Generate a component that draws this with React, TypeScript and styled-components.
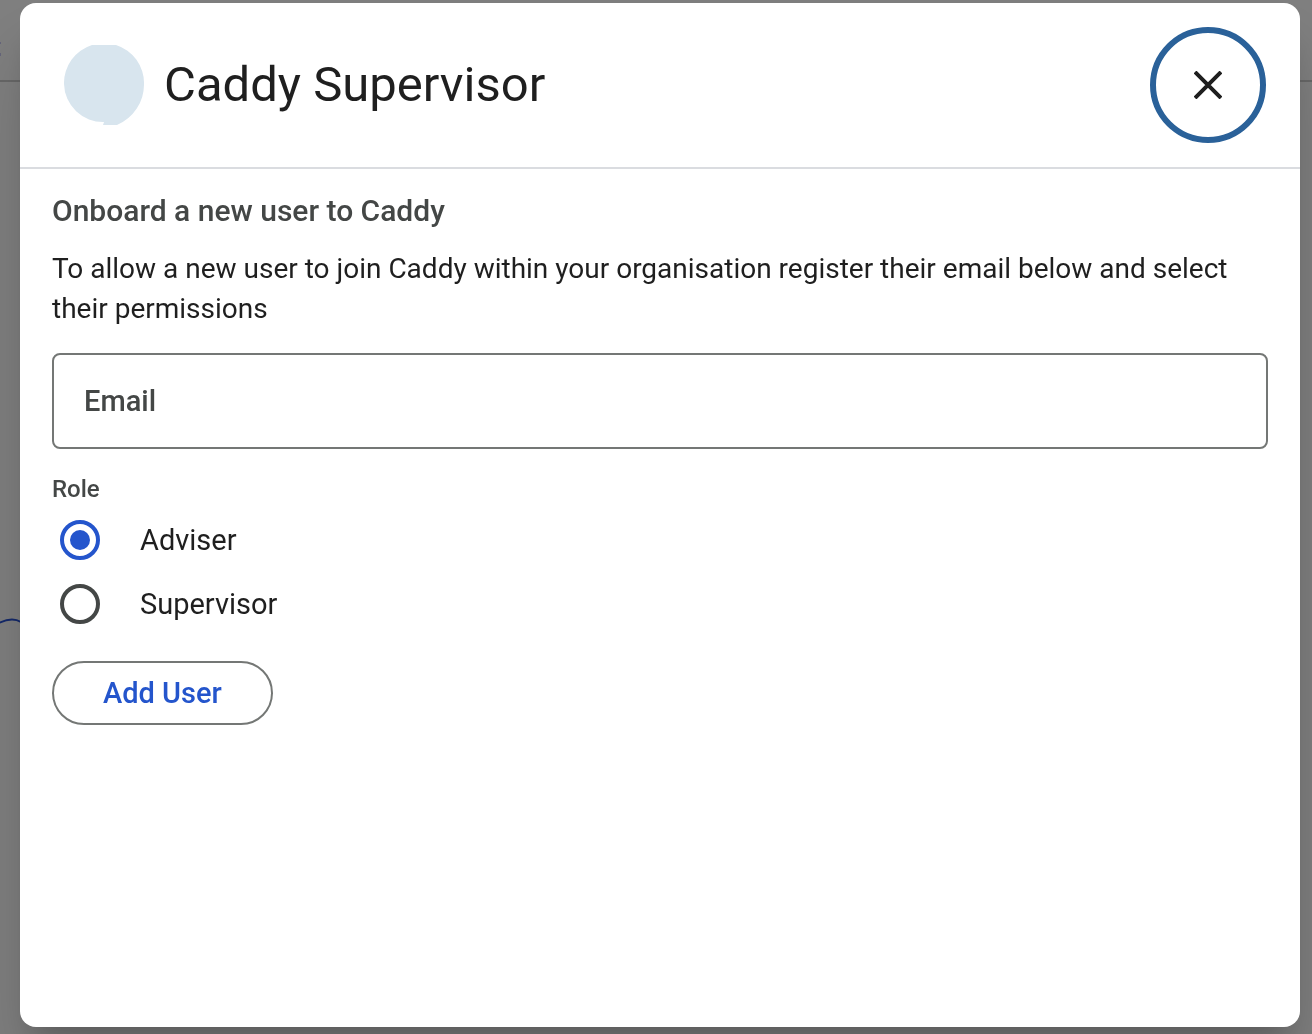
import React, { useState } from "react";
import styled, { createGlobalStyle } from "styled-components";

const GlobalStyle = createGlobalStyle`
  *, *::before, *::after { box-sizing: border-box; }
  body {
    margin: 0;
    background: #808080;
    color: #1f1f1f;
    font-family: Roboto, "Liberation Sans", sans-serif;
  }
`;

const Page = styled.div`
  min-height: 100vh;
  overflow: hidden;
`;

const PageBar = styled.div`
  display: flex;
  align-items: flex-end;
  height: 82px;
  padding-bottom: 22px;
  border-bottom: 2px solid #686868;
`;

const Sketch = styled.svg`
  display: block;
  margin-top: 530px;
`;

const Overlay = styled.div`
  position: fixed;
  inset: 0;
  display: flex;
  padding: 3px 12px 7px 20px;
`;

const Dialog = styled.section`
  flex: 1;
  min-width: 0;
  overflow-y: auto;
  border-radius: 16px;
  background: #fff;
  box-shadow: 0 22px 30px -14px rgba(0, 0, 0, 0.2),
    0 48px 76px 6px rgba(0, 0, 0, 0.14);
`;

const Header = styled.header`
  display: flex;
  align-items: center;
  gap: 20px;
  padding: 24px 34px 24px 44px;
  border-bottom: 2px solid #dadce0;
`;

const Title = styled.h1`
  flex: 1;
  margin: 0;
  font-size: 49px;
  font-weight: 400;
  line-height: 64px;
`;

const CloseButton = styled.button`
  display: grid;
  place-items: center;
  width: 116px;
  height: 116px;
  padding: 0;
  border: 6px solid #2a6199;
  border-radius: 50%;
  background: transparent;
  color: #1f1f1f;
  cursor: pointer;
`;

const Form = styled.form`
  display: flex;
  flex-direction: column;
  align-items: flex-start;
  padding: 22px 32px;
`;

const Subtitle = styled.h2`
  margin: 0 0 18px;
  color: #444746;
  font-size: 30px;
  font-weight: 500;
  line-height: 40px;
`;

const Text = styled.p`
  margin: 0 0 24px;
  font-size: 28px;
  line-height: 40px;
`;

const EmailInput = styled.input`
  width: 100%;
  height: 96px;
  padding: 0 30px;
  border: 2px solid #747775;
  border-radius: 8px;
  background: #fff;
  color: #1f1f1f;
  font-family: inherit;
  font-size: 29px;
  font-weight: 500;

  &::placeholder { color: #444746; opacity: 1; }
`;

const Roles = styled.fieldset`
  margin: 24px 0 25px;
  padding: 0;
  border: 0;
`;

const Legend = styled.legend`
  padding: 0;
  margin-bottom: 3px;
  color: #444746;
  font-size: 24px;
  font-weight: 500;
  line-height: 32px;
`;

const Option = styled.label`
  display: flex;
  align-items: center;
  gap: 40px;
  height: 64px;
  padding: 0 8px;
  font-size: 29px;
  line-height: 40px;
  cursor: pointer;
`;

const Radio = styled.input`
  appearance: none;
  display: grid;
  place-items: center;
  width: 40px;
  height: 40px;
  margin: 0;
  border: 4px solid #444746;
  border-radius: 50%;

  &:checked { border-color: #2455cc; }
  &:checked::before {
    content: "";
    width: 20px;
    height: 20px;
    border-radius: 50%;
    background: #2455cc;
  }
`;

const SubmitButton = styled.button`
  height: 64px;
  padding: 0 49px;
  border: 2px solid #747775;
  border-radius: 32px;
  background: transparent;
  color: #2455cc;
  font-family: inherit;
  font-size: 29px;
  font-weight: 500;
  line-height: 40px;
  cursor: pointer;
`;

const roles = ["Adviser", "Supervisor"];

export default function App() {
  const [role, setRole] = useState("Adviser");

  return (
    <>
      <GlobalStyle />
      <Page aria-hidden="true">
        <PageBar>
          <svg width="2" height="16" viewBox="0 0 2 16">
            <path d="M0 0h1v2H0zM0 11h1v3H0z" fill="#66667c" />
          </svg>
        </PageBar>
        <Sketch width="24" height="16" viewBox="0 0 24 16">
          <path d="M-1 11C5 8 13 5 21 10" fill="none" stroke="#14296b" strokeWidth="2" />
        </Sketch>
      </Page>
      <Overlay>
        <Dialog role="dialog" aria-modal="true" aria-labelledby="dialog-title">
          <Header>
            <svg width="80" height="80" viewBox="0 0 80 80" aria-hidden="true">
              <path
                d="M28 0H52A40 40 0 0 1 80 39A44 44 0 0 1 53 80H39L40 77A39 39 0 0 1 0 39A40 40 0 0 1 28 0Z"
                fill="#d8e5ee"
              />
            </svg>
            <Title id="dialog-title">Caddy Supervisor</Title>
            <CloseButton type="button" aria-label="Close">
              <svg width="28" height="28" viewBox="0 0 28 28" aria-hidden="true">
                <path d="M1 1L27 27M27 1L1 27" stroke="currentColor" strokeWidth="4" />
              </svg>
            </CloseButton>
          </Header>
          <Form onSubmit={(event) => event.preventDefault()}>
            <Subtitle>Onboard a new user to Caddy</Subtitle>
            <Text>
              To allow a new user to join Caddy within your organisation register
              their email below and select their permissions
            </Text>
            <EmailInput type="email" name="email" aria-label="Email" placeholder="Email" />
            <Roles>
              <Legend>Role</Legend>
              {roles.map((name) => (
                <Option key={name}>
                  <Radio
                    type="radio"
                    name="role"
                    value={name}
                    checked={role === name}
                    onChange={() => setRole(name)}
                  />
                  {name}
                </Option>
              ))}
            </Roles>
            <SubmitButton type="submit">Add User</SubmitButton>
          </Form>
        </Dialog>
      </Overlay>
    </>
  );
}
